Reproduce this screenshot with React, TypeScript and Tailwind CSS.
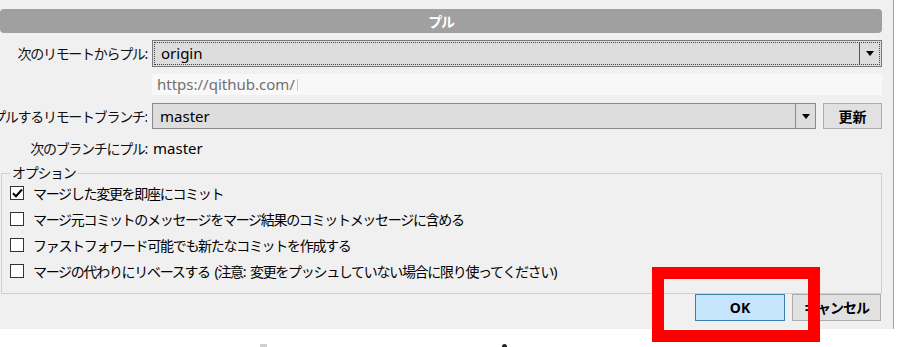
import React from 'react'

const jp = { fontFamily: '"Noto Sans", "Noto Sans CJK JP", sans-serif' }

function Arrow() {
  return (
    <svg width="8" height="5" viewBox="0 0 8 5" className="block">
      <path d="M0 0h8L4 5z" fill="#000" />
    </svg>
  )
}

function Check({ checked, label }: { checked?: boolean; label: string }) {
  return (
    <div className="flex h-[26px] items-center">
      <span className="ml-[8px] flex h-[14px] w-[14px] items-center justify-center border border-[#333] bg-white">
        {checked && (
          <svg width="11" height="10" viewBox="0 0 11 10">
            <path d="M1 5.2l3 3L10 1.5" stroke="#000" strokeWidth="2" fill="none" />
          </svg>
        )}
      </span>
      <span className="ml-[9px] text-[14px] tracking-[-1.3px] whitespace-pre text-black">{label}</span>
    </div>
  )
}

export default function App() {
  return (
    <div className="relative h-[347px] w-[900px] overflow-hidden bg-white" style={jp}>
      <div className="flex h-[329px] w-[894px] flex-col border-r border-[#a0a0a0] bg-[#f0f0f0] pt-[9px]">
        {/* title */}
        <div className="flex h-[24px] w-[882px] items-center justify-center rounded-[4px] bg-[#a0a0a0] text-[14px] font-bold tracking-[-1.3px] text-white">
          プル
        </div>

        {/* remote */}
        <div className="mt-[7px] flex h-[27px] items-center">
          <span className="w-[147px] text-right text-[14px] tracking-[-1.3px] whitespace-nowrap text-[#111]">次のリモートからプル:</span>
          <div className="ml-[5px] flex h-[27px] w-[730px] border border-[#7a7a7a] bg-[#dddddd] p-[1px]">
            <div className="flex flex-1 border border-dotted border-[#444]">
              <span className="flex flex-1 items-center pl-[6px] text-[15px] text-black">origin</span>
              <span className="flex w-[20px] items-center justify-center border-l border-[#555]">
                <Arrow />
              </span>
            </div>
          </div>
        </div>

        {/* url */}
        <div className="mt-[7px] ml-[152px] flex h-[21px] w-[730px] items-center bg-[#f8f8f8] pl-[5px] text-[15px] text-[#707070]">
          https://qithub.com/<span className="ml-[2px] h-[12px] w-[1px] bg-[#c8c8c8]" />
        </div>

        {/* branch */}
        <div className="mt-[8px] flex h-[26px] items-center">
          <span className="flex w-[147px] shrink-0 justify-end overflow-hidden text-[14px] tracking-[-1.3px] whitespace-nowrap text-[#111]">
            <span className="shrink-0">プルするリモートブランチ:</span>
          </span>
          <div className="ml-[5px] flex h-[26px] w-[664px] border border-[#8a8a8a] bg-[#dddddd]">
            <span className="flex flex-1 items-center pl-[7px] text-[15px] text-black">master</span>
            <span className="flex w-[20px] items-center justify-center border-l border-[#8a8a8a]">
              <Arrow />
            </span>
          </div>
          <button className="ml-[7px] h-[26px] w-[59px] border border-[#adadad] bg-[#e1e1e1] text-[14px] font-bold text-black">
            更新
          </button>
        </div>

        {/* local */}
        <div className="mt-[7px] flex h-[24px] items-center">
          <span className="w-[147px] text-right text-[14px] tracking-[-1.3px] whitespace-nowrap text-[#111]">次のブランチにプル:</span>
          <span className="ml-[6px] text-[15px] text-black">master</span>
        </div>

        {/* options */}
        <fieldset className="mt-[4px] ml-[1px] w-[881px] border border-[#cfcfcf] pb-[9px]">
          <legend className="ml-[8px] px-[2px] text-[14px] leading-[18px] tracking-[-1.3px] text-[#111]">オプション</legend>
          <div className="-mt-[2px]">
            <Check checked label="マージした変更を即座にコミット" />
            <Check label="マージ元コミットのメッセージをマージ結果のコミットメッセージに含める" />
            <Check label="ファストフォワード可能でも新たなコミットを作成する" />
            <Check label="マージの代わりにリベースする  (注意:  変更をプッシュしていない場合に限り使ってください)" />
          </div>
        </fieldset>

        {/* buttons */}
        <div className="flex justify-end gap-[7px] pr-[12px]">
          <button className="h-[27px] w-[90px] border border-[#3c7fb1] bg-[#c4e5fc] text-[14px] font-bold text-black">
            OK
          </button>
          <button className="h-[27px] w-[89px] border border-[#adadad] bg-[#e1e1e1] text-[14px] font-bold tracking-[-1px] text-black">
            キャンセル
          </button>
        </div>
      </div>

      {/* cut-off caption fragments */}
      <div className="mt-[15px] flex items-start">
        <span className="ml-[260px] h-[3px] w-[7px] bg-[#d0d0d0]" />
        <span className="ml-[235px] h-[3px] w-[5px] rounded-t-full bg-[#222]" />
      </div>

      {/* highlight */}
      <div className="absolute top-[267px] left-[652px] h-[75px] w-[168px] border-[12px] border-[#ff0000]" />
    </div>
  )
}
